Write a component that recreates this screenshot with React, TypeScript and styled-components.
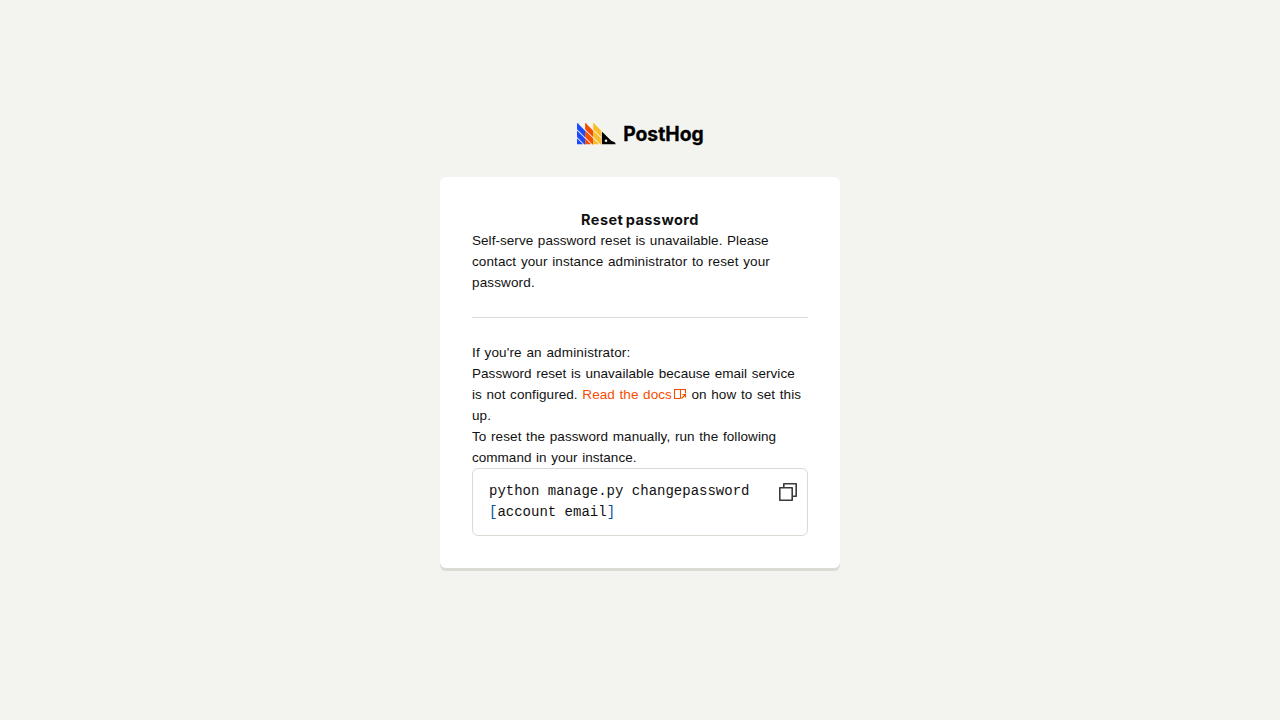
import React from 'react';
import styled, { createGlobalStyle } from 'styled-components';

const GlobalStyle = createGlobalStyle`
  body {
    margin: 0;
    background: #f3f4ef;
    color: #111;
    font: 14px/21px "Liberation Sans", Arial, sans-serif;
  }
`;

const Page = styled.main`
  box-sizing: border-box;
  min-height: 720px;
  padding-top: 121px;
  display: flex;
  flex-direction: column;
  align-items: center;
`;

const Logo = styled.svg`
  display: block;
  width: 128px;
  height: 26px;
  margin-bottom: 30px;
  overflow: visible;
`;

const Wordmark = styled.text`
  font: 700 19.5px Inter, sans-serif;
  stroke: #000;
  stroke-width: 0.3px;
`;

const Card = styled.section`
  box-sizing: border-box;
  width: 400px;
  height: 391px;
  padding: 32px;
  background: #fff;
  border-radius: 6px;
  box-shadow: 0 3px 0 #dadbd2;
`;

const Title = styled.h2`
  margin: 0;
  font: 700 14.5px/21px Inter, sans-serif;
  letter-spacing: 0.45px;
  word-spacing: -1.5px;
  text-align: center;
`;

const Line = styled.span<{ $spacing: number }>`
  display: block;
  white-space: nowrap;
  font-size: 13.5px;
  word-spacing: 0.8px;
  letter-spacing: ${({ $spacing }) => $spacing}px;
`;

const Paragraph = styled.p`
  margin: 0;
`;

const Divider = styled.hr`
  height: 1px;
  margin: 24px 0;
  border: 0;
  background: #dadbd2;
`;

const DocsLink = styled.a`
  color: #f54e00;
  text-decoration: none;
`;

const DocsIcon = styled.svg`
  width: 14px;
  height: 14px;
  margin-left: 1px;
  vertical-align: -3px;
`;

const Snippet = styled.div`
  box-sizing: border-box;
  height: 68px;
  padding: 12px 9px 0 16px;
  display: flex;
  justify-content: space-between;
  border: 1px solid #dadbd2;
  border-radius: 6px;
`;

const Code = styled.code`
  font: 14px/21px "Liberation Mono", monospace;
`;

const Bracket = styled.span`
  color: #0451a5;
`;

const CopyButton = styled.button`
  width: 20px;
  height: 20px;
  margin-top: 1px;
  padding: 0;
  border: 0;
  background: none;
`;

const columns = [
  { x: 0, color: '#1d4aff' },
  { x: 8.1, color: '#f54e00' },
  { x: 16.2, color: '#f9bd2b' },
];

export default function App() {
  return (
    <>
      <GlobalStyle />
      <Page>
        <Logo viewBox="0 0 128 26" aria-label="PostHog">
          <g transform="translate(1 1.7)">
            {columns.map(({ x, color }) => (
              <g key={x} transform={`translate(${x} 0)`} fill={color}>
                <path d="M0 .8Q0 0 .7.6L8.1 8V14.6L0 6.5Z" />
                <path d="M0 7.7L8.1 15.8V21.7H7.4L0 14.3Z" />
                <path d="M0 15.5L5.8 21.3Q6 21.6 5.6 21.6H.6Q0 21.6 0 21Z" />
              </g>
            ))}
            <path
              fillRule="evenodd"
              d="M24.9 9.8Q24.9 8.8 25.6 9.5L33.7 17.6Q34.5 18.4 36 18.7Q38.7 19.2 38.7 21.6H25.4Q24.9 21.6 24.9 21ZM29 16.7a1.3 1.3 0 1 0 0 2.6a1.3 1.3 0 1 0 0-2.6Z"
            />
          </g>
          <Wordmark x="47.2" y="19.8" textLength="80.5" lengthAdjust="spacingAndGlyphs">PostHog</Wordmark>
        </Logo>
        <Card>
          <Title>Reset password</Title>
          <Paragraph>
            <Line $spacing={0.046}>Self-serve password reset is unavailable. Please</Line>
            <Line $spacing={0.1}>contact your instance administrator to reset your</Line>
            <Line $spacing={0.14}>password.</Line>
          </Paragraph>
          <Divider />
          <Paragraph>
            <Line $spacing={0.15}>If you're an administrator:</Line>
            <Line $spacing={0.04}>Password reset is unavailable because email service</Line>
            <Line $spacing={0.07}>
              is not configured.{' '}
              <DocsLink>
                Read the docs
                <DocsIcon viewBox="0 0 14 14" fill="none" stroke="currentColor" strokeWidth="1.1">
                  <path d="M7.5 10.5H1.5V1.5H12.5V5.5M7.5 1.5V10.5M8.5 10.5L12 7M9.5 6.5H12.5V9.5" />
                </DocsIcon>
              </DocsLink>{' '}
              on how to set this
            </Line>
            <Line $spacing={0.1}>up.</Line>
          </Paragraph>
          <Paragraph>
            <Line $spacing={0.08}>To reset the password manually, run the following</Line>
            <Line $spacing={0.03}>command in your instance.</Line>
          </Paragraph>
          <Snippet>
            <Code>
              python manage.py changepassword
              <br />
              <Bracket>[</Bracket>account email<Bracket>]</Bracket>
            </Code>
            <CopyButton aria-label="Copy">
              <svg width="20" height="20" viewBox="0 0 20 20" fill="none" stroke="#3b3b3b" strokeWidth="1.6" strokeLinejoin="round">
                <path d="M5.8 5.5V1.8H18.2V14.2H14.5M1.8 5.8H14.2V18.2H1.8Z" />
              </svg>
            </CopyButton>
          </Snippet>
        </Card>
      </Page>
    </>
  );
}
